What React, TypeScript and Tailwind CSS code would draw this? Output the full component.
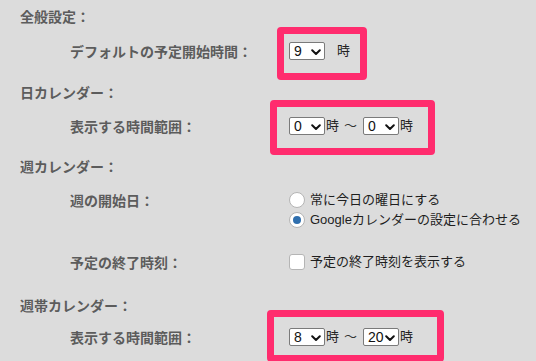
import React from "react";

const labelFont = { fontFamily: '"Noto Sans CJK JP", "Noto Sans", sans-serif' };

function Chevron() {
  return (
    <svg width="10" height="7" viewBox="0 0 10 7" className="absolute right-[3px] top-[6px]">
      <path d="M1.2 1.3 L5 5 L8.8 1.3" fill="none" stroke="#111" strokeWidth="2" strokeLinecap="round" strokeLinejoin="round" />
    </svg>
  );
}

function FakeSelect({ value }: { value: string }) {
  return (
    <div className="relative w-[36px] h-[18px] bg-white border border-[#7a7a7a] rounded-[2px] shrink-0">
      <span className="absolute left-[4px] top-[0px] text-[14px] leading-[16px] text-[#111] font-['Liberation_Sans',sans-serif]">
        {value}
      </span>
      <Chevron />
    </div>
  );
}

function PinkBox({ className }: { className: string }) {
  return <div className={"absolute border-[7px] border-[#ff2c6e] rounded-[4px] pointer-events-none " + className} />;
}

function Ji({ className = "" }: { className?: string }) {
  return <span className={"text-[13px] leading-[18px] text-[#222] " + className}>時</span>;
}

function Range({ from, to }: { from: string; to: string }) {
  return (
    <div className="flex items-center">
      <FakeSelect value={from} />
      <Ji className="ml-[1px]" />
      <span className="ml-[5px] text-[13px] leading-[18px] text-[#333]">〜</span>
      <span className="w-[6px]" />
      <FakeSelect value={to} />
      <Ji className="ml-[1px]" />
    </div>
  );
}

function Title({ children, mt }: { children: React.ReactNode; mt: string }) {
  return (
    <div className={"h-[20px] flex items-center pl-[20px] text-[14px] font-bold text-[#5c5c5c] " + mt}>{children}</div>
  );
}

function Row({ label, mt, children }: { label: string; mt: string; children: React.ReactNode }) {
  return (
    <div className={"flex items-start " + mt}>
      <div className="w-[289px] shrink-0 pl-[70px] h-[20px] flex items-center text-[14px] font-bold text-[#5c5c5c]">
        <span style={labelFont}>{label}</span>
      </div>
      <div className="flex-1">{children}</div>
    </div>
  );
}

function Radio({ checked, label }: { checked?: boolean; label: string }) {
  return (
    <div className="h-[20px] flex items-center">
      <div className="w-[16px] h-[16px] rounded-full bg-white border border-[#b5b5b5] flex items-center justify-center shrink-0">
        {checked && <div className="w-[8px] h-[8px] rounded-full bg-[#2f6fae]" />}
      </div>
      <span className="ml-[5px] text-[13px] text-[#1e1e1e]">{label}</span>
    </div>
  );
}

export default function App() {
  return (
    <div
      className="w-[536px] h-[361px] bg-[#dcdcdc] overflow-hidden flex flex-col"
      style={{ fontFamily: '"Liberation Sans", "Noto Sans CJK JP", sans-serif' }}
    >
      <Title mt="mt-[6px]">
        <span style={labelFont}>全般設定：</span>
      </Title>
      <Row label="デフォルトの予定開始時間：" mt="mt-[15px]">
        <div className="relative flex items-center h-[20px]">
          <PinkBox className="left-[-12px] top-[-14px] w-[90px] h-[53px]" />
          <FakeSelect value="9" />
          <Ji className="ml-[12px]" />
        </div>
      </Row>
      <Title mt="mt-[21px]">
        <span style={labelFont}>日カレンダー：</span>
      </Title>
      <Row label="表示する時間範囲：" mt="mt-[14px]">
        <div className="relative h-[20px] flex items-center">
          <PinkBox className="left-[-19px] top-[-16px] w-[165px] h-[55px]" />
          <Range from="0" to="0" />
        </div>
      </Row>
      <Title mt="mt-[20px]">
        <span style={labelFont}>週カレンダー：</span>
      </Title>
      <Row label="週の開始日：" mt="mt-[14px]">
        <div className="flex flex-col">
          <Radio label="常に今日の曜日にする" />
          <Radio checked label="Googleカレンダーの設定に合わせる" />
        </div>
      </Row>
      <Row label="予定の終了時刻：" mt="mt-[22px]">
        <div className="h-[20px] flex items-center">
          <div className="w-[16px] h-[16px] rounded-[3px] bg-white border border-[#b5b5b5] shrink-0" />
          <span className="ml-[5px] text-[13px] text-[#1e1e1e]">予定の終了時刻を表示する</span>
        </div>
      </Row>
      <Title mt="mt-[23px]">
        <span style={labelFont}>週帯カレンダー：</span>
      </Title>
      <Row label="表示する時間範囲：" mt="mt-[12px]">
        <div className="relative h-[20px] flex items-center">
          <PinkBox className="left-[-22px] top-[-17px] w-[177px] h-[52px]" />
          <Range from="8" to="20" />
        </div>
      </Row>
    </div>
  );
}
